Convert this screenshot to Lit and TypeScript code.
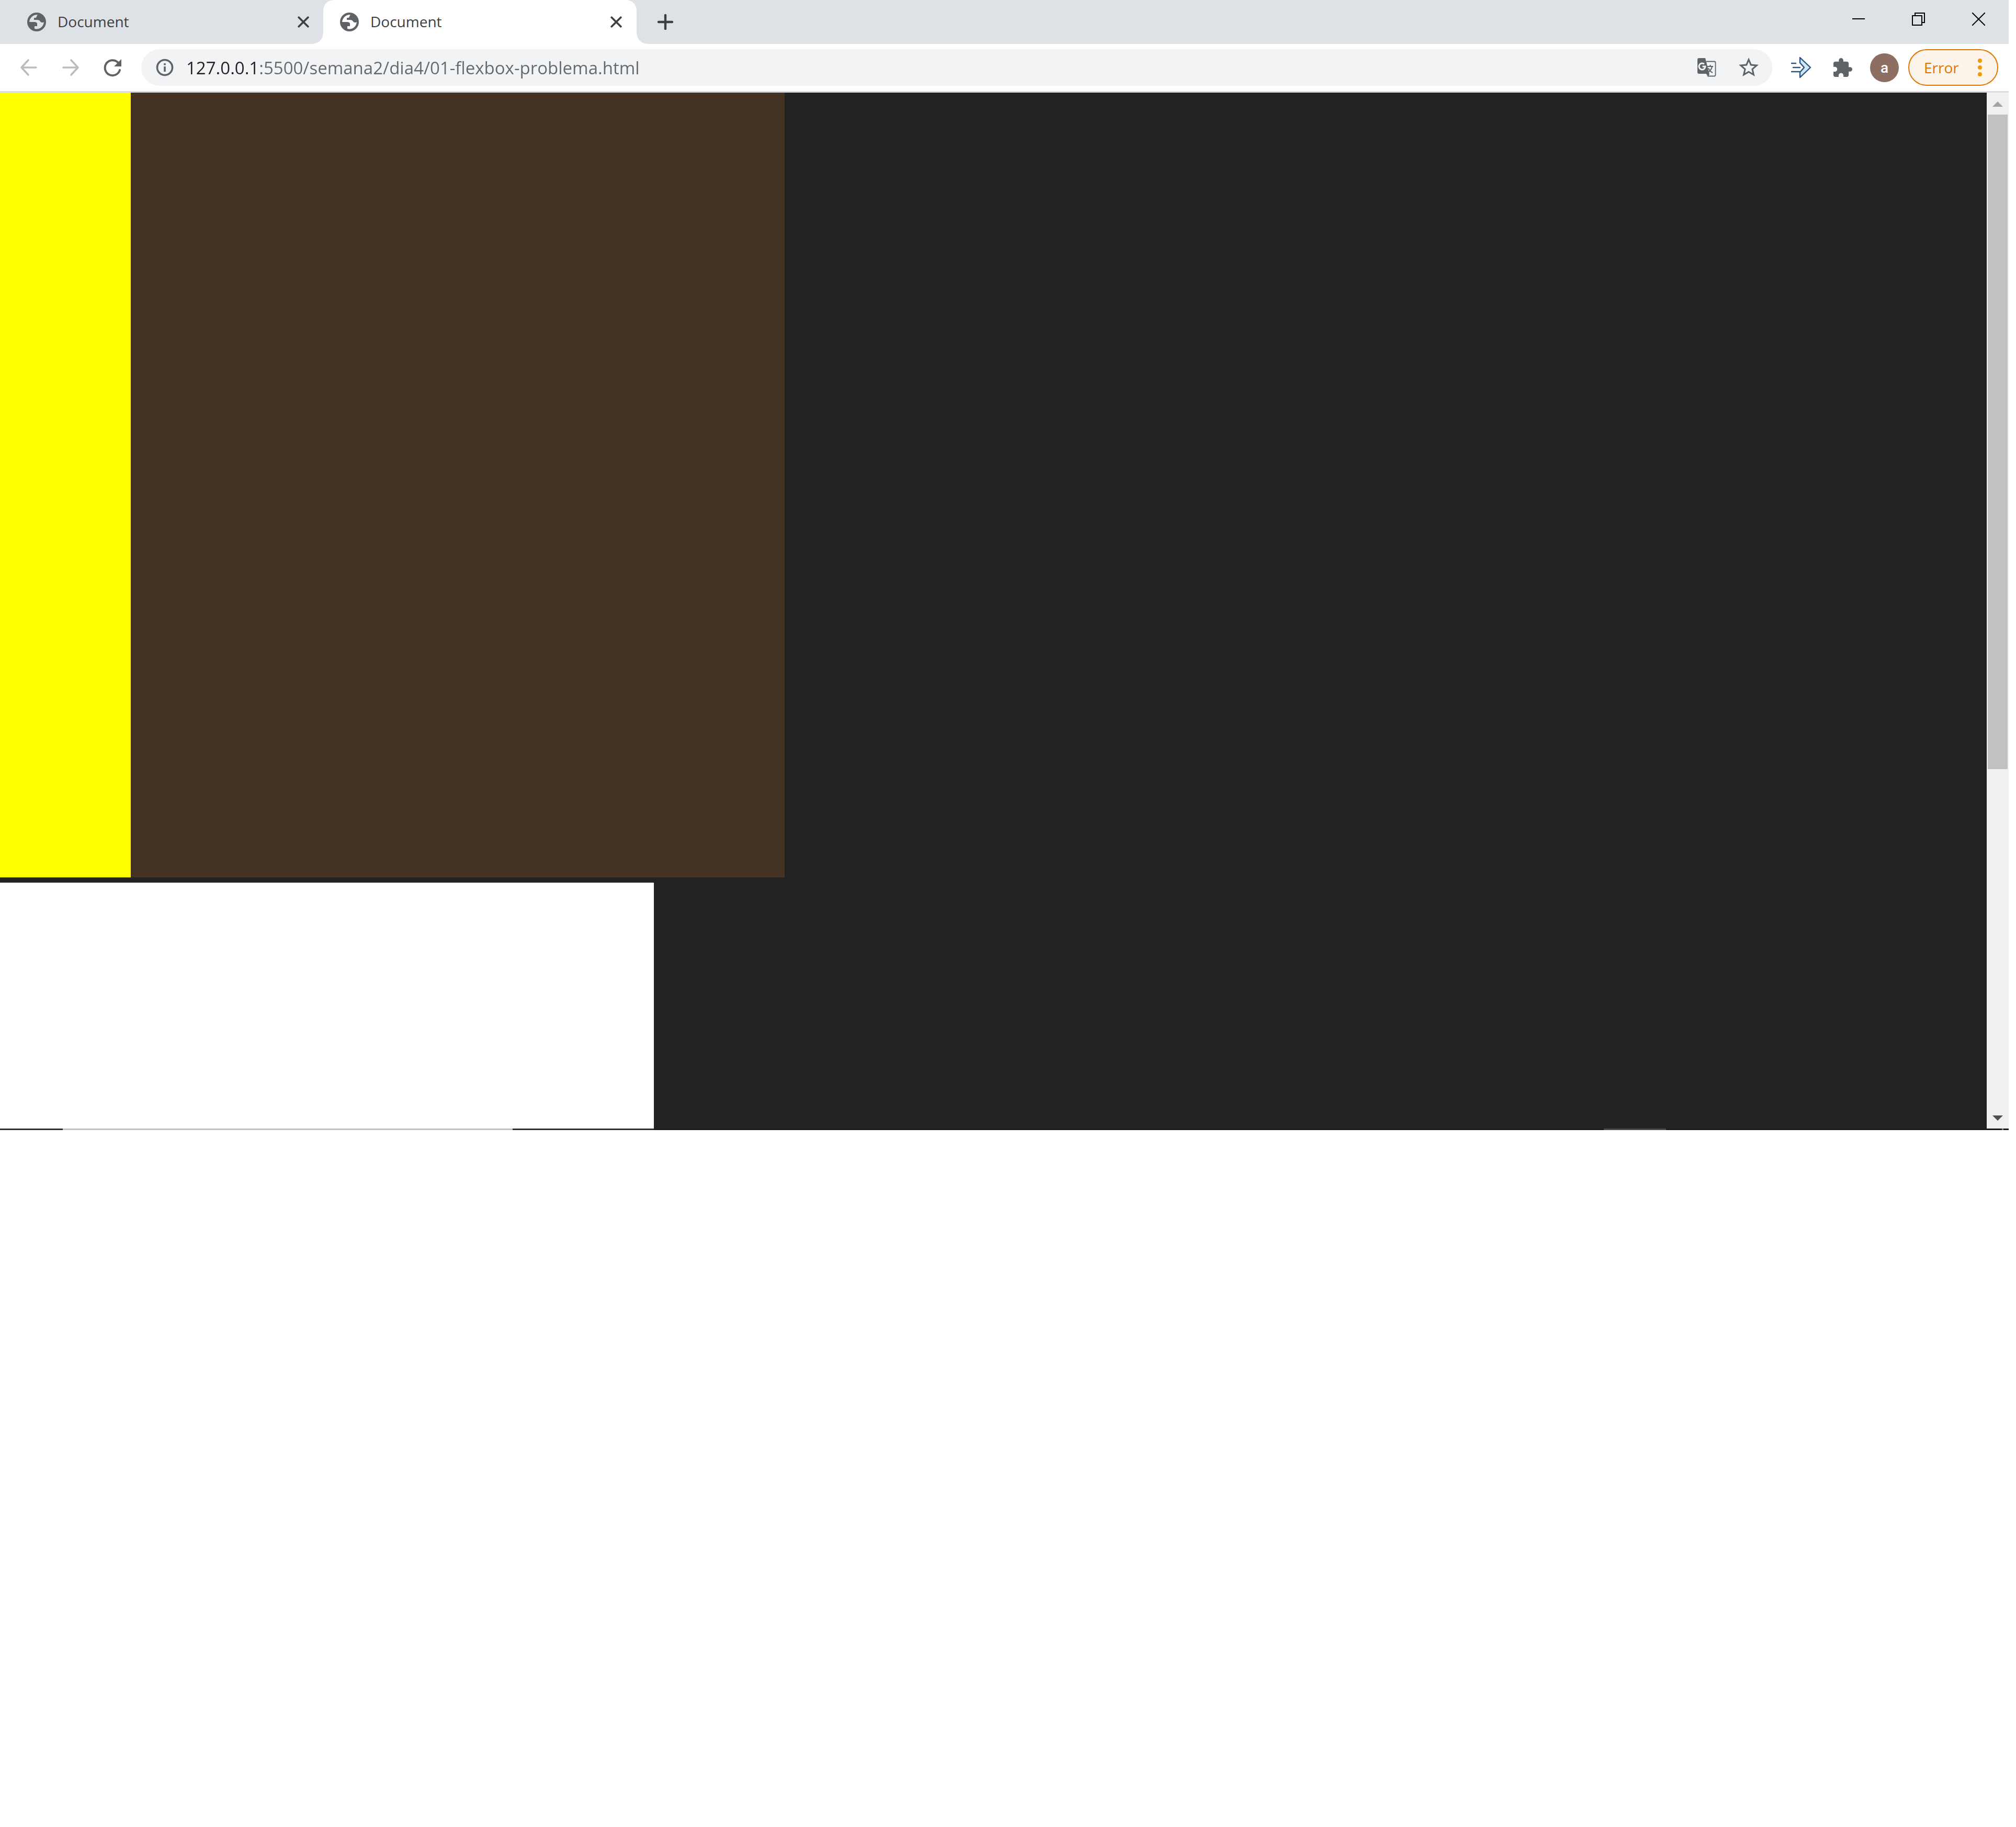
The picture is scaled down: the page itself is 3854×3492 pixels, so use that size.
import { LitElement, html, css } from "lit";
import { customElement } from "lit/decorators.js";

const globe = html`<svg class="globe" viewBox="0 0 36 36" aria-hidden="true">
  <circle cx="18" cy="18" r="18" fill="#5f6368" />
  <path fill="var(--tab-fill)" d="M20 4C11 4 5 10 4 18H13C17 18 19 19 19 22V26H14V31C24 33 31 27 32 18C30 20 26 19 25 17C24 15 22 14 19 14H13V11C13 10 14 10 16 10C18 10 18 6 20 4Z" />
</svg>`;
const cross = html`<svg class="cross" viewBox="0 0 20 20" aria-hidden="true">
  <path d="M2 2L18 18M18 2L2 18" stroke="#3c4043" stroke-width="3.4" stroke-linecap="round" />
</svg>`;
const arrow = (d: string) => html`<svg viewBox="0 0 34 34" width="34" height="34" aria-hidden="true">
  <path d=${d} fill="none" stroke="#babcbe" stroke-width="3.6" stroke-linecap="round" stroke-linejoin="round" />
</svg>`;

@customElement("app-root")
export class AppRoot extends LitElement {
  static styles = css`
    :host {
      display: block;
      min-height: 100vh;
      background: #fff;
      font-family: "Open Sans", "Noto Sans", sans-serif;
    }
    * { box-sizing: border-box; }
    svg { display: block; flex: none; }
    button {
      display: flex;
      align-items: center;
      justify-content: center;
      flex: none;
      margin: 0;
      padding: 0;
      border: 0;
      background: none;
      font: inherit;
    }
    .window { margin-right: 14px; }
    .strip {
      display: flex;
      height: 84px;
      background: #dee1e6;
      --tab-fill: #dee1e6;
    }
    .tab {
      display: flex;
      align-items: center;
      width: 599px;
      padding: 0 28px 0 32px;
      font-size: 28px;
      line-height: 40px;
      color: #3c4043;
    }
    .tab.idle { width: 618px; padding: 0 27px 0 52px; }
    .tab.active {
      position: relative;
      background: #fff;
      border-radius: 20px 20px 0 0;
      --tab-fill: #fff;
    }
    .tab.active::before,
    .tab.active::after {
      content: "";
      position: absolute;
      bottom: 0;
      width: 20px;
      height: 20px;
    }
    .tab.active::before { right: 100%; background: radial-gradient(circle at 0 0, transparent 19px, #fff 20px); }
    .tab.active::after { left: 100%; background: radial-gradient(circle at 100% 0, transparent 19px, #fff 20px); }
    .title { flex: 1; margin-left: 22px; padding-bottom: 2px; }
    .globe { width: 36px; height: 36px; }
    .cross { width: 22px; height: 22px; }
    .add { width: 110px; }
    .controls { display: flex; margin-left: auto; }
    .controls button { width: 115px; height: 72px; }
    .toolbar {
      display: flex;
      align-items: center;
      height: 93px;
      padding: 0 20px 0 15px;
      border-bottom: 3px solid #dadce0;
      background: #fff;
    }
    .nav { width: 80px; height: 70px; }
    .omnibox {
      display: flex;
      flex: 1;
      align-items: center;
      height: 70px;
      margin-left: 15px;
      padding: 0 25px 0 28px;
      border-radius: 35px;
      background: #f1f3f4;
    }
    .url {
      flex: 1;
      min-width: 0;
      height: 60px;
      margin: 0 0 0 24px;
      padding: 0;
      border: 0;
      outline: 0;
      font: 33px "Open Sans", "Noto Sans", sans-serif;
      color: #66696c;
      background: linear-gradient(90deg, #202124 140px, #66696c 140px);
      -webkit-background-clip: text;
      background-clip: text;
      -webkit-text-fill-color: transparent;
    }
    .action { width: 40px; height: 60px; }
    .action + .action { margin-left: 40px; }
    .ext { width: 80px; height: 70px; }
    .extensions { display: flex; margin-left: 15px; }
    .avatar {
      width: 55px;
      height: 55px;
      margin-left: 12px;
      border-radius: 50%;
      background: #8d6e63;
      color: #fff;
      font: 500 28px Roboto, sans-serif;
    }
    .error {
      justify-content: space-between;
      width: 172px;
      height: 70px;
      margin-left: 18px;
      padding: 0 28px;
      border: 2px solid #e37400;
      border-radius: 35px;
      background: #fcf3ea;
      color: #e37400;
      font-size: 28px;
    }
    .view { display: flex; background: #222; }
    .page { flex: 1; }
    .row { display: flex; height: 1500px; margin-bottom: 10px; }
    .yellow { width: 250px; background: #ff0; }
    .brown { width: 1250px; background: #432; }
    .white { width: 1250px; height: 470px; background: #fff; }
    .scroll {
      display: flex;
      flex-direction: column;
      align-items: center;
      width: 42px;
      background: #f0f0f0;
    }
    .step { width: 42px; height: 42px; padding-top: 2px; }
    .track { flex: 1; width: 38px; }
    .thumb { height: 1251px; background: #c1c1c1; }
    .taskbar {
      display: flex;
      height: 3px;
      background: linear-gradient(90deg, #303030 1250px, #1f1b1d 1250px);
    }
    .search { width: 860px; margin-left: 120px; background: #c1c1c1; }
    .running { width: 119px; margin-left: auto; background: #4a4a4a; }
    .peek { width: 3px; margin: 0 10px 0 642px; background: #777; }
  `;

  render() {
    return html`
      <div class="window">
        <header class="strip">
          <div class="tab idle">
            ${globe}<span class="title">Document</span>
            <button aria-label="Close tab">${cross}</button>
          </div>
          <div class="tab active">
            ${globe}<span class="title">Document</span>
            <button aria-label="Close tab">${cross}</button>
          </div>
          <button class="add" aria-label="New tab">
            <svg width="32" height="32" viewBox="0 0 32 32"><path d="M16 3V29M3 16H29" stroke="#3c4043" stroke-width="4.4" stroke-linecap="round" /></svg>
          </button>
          <div class="controls">
            <button aria-label="Minimize"><svg width="25" height="25"><path d="M1 12H25" stroke="#000" stroke-width="2" /></svg></button>
            <button aria-label="Restore"><svg width="25" height="25" fill="none" stroke="#000" stroke-width="2"><path d="M1 6H19V24H1ZM6 6V1H24V19H19" /></svg></button>
            <button aria-label="Close"><svg width="25" height="25"><path d="M0 0L25 25M25 0L0 25" stroke="#000" stroke-width="2" /></svg></button>
          </div>
        </header>
        <nav class="toolbar">
          <button class="nav" aria-label="Back">${arrow("M31 17H3M16 3L3 17L16 31")}</button>
          <button class="nav" aria-label="Forward">${arrow("M3 17H31M18 3L31 17L18 31")}</button>
          <button class="nav" aria-label="Reload">
            <svg width="36" height="36" viewBox="0 0 36 36">
              <path d="M32 23A14.5 14.5 0 1 1 28 8" fill="none" stroke="#5f6368" stroke-width="4" stroke-linecap="round" />
              <path d="M35 2V16H21Z" fill="#5f6368" />
            </svg>
          </button>
          <div class="omnibox">
            <button aria-label="Site information">
              <svg width="34" height="34" viewBox="0 0 34 34">
                <circle cx="17" cy="17" r="14.5" fill="none" stroke="#5f6368" stroke-width="3.6" />
                <path d="M15.2 9H18.8V12.6H15.2ZM15.2 15H18.8V25H15.2Z" fill="#5f6368" />
              </svg>
            </button>
            <input class="url" type="text" aria-label="Address" .value=${"127.0.0.1:5500/semana2/dia4/01-flexbox-problema.html"} />
            <button class="action" aria-label="Translate">
              <svg width="36" height="36" viewBox="0 0 36 36">
                <path d="M17 6.5H32A2.5 2.5 0 0 1 34.5 9V32A2.5 2.5 0 0 1 32 34.500H20" fill="none" stroke="#5f6368" stroke-width="1.8" />
                <path d="M3 0H15L23 31L20 36L17 30H3A3 3 0 0 1 0 27V3A3 3 0 0 1 3 0Z" fill="#5f6368" />
                <path d="M13 11.500A6 6 0 1 0 15 16H9.500" fill="none" stroke="#f1f3f4" stroke-width="3" />
                <path d="M19 16H30M24.500 13V16M28 16C27 21 24 25 20 28M21 19C22 22 25 26 29 28" fill="none" stroke="#5f6368" stroke-width="2" />
              </svg>
            </button>
            <button class="action" aria-label="Bookmark this tab">
              <svg width="38" height="38" viewBox="2 2 20 20">
                <path fill="#5f6368" d="M22 9.24l-7.19-.62L12 2 9.19 8.63 2 9.24l5.46 4.73L5.82 21 12 17.27 18.18 21l-1.63-7.03L22 9.24zM12 15.4l-3.76 2.27 1-4.28-3.32-2.88 4.38-.38L12 6.1l1.71 4.04 4.38.38-3.32 2.88 1 4.28L12 15.4z" />
              </svg>
            </button>
          </div>
          <div class="extensions">
            <button class="ext" aria-label="Extension">
              <svg width="40" height="42" viewBox="0 0 40 42" fill="none" stroke="#2b5480" stroke-width="2.4" stroke-linecap="round" stroke-linejoin="round">
                <path d="M18 2L38 21L18 40V30L26 21L18 12Z" fill="#cfe6f8" />
                <path d="M2 13H10M5 21H18M2 29H17" />
              </svg>
            </button>
            <button class="ext" aria-label="Extensions">
              <svg width="36" height="36" viewBox="2 1 21 21">
                <path fill="#5f6368" d="M20.5 11H19V7c0-1.1-.9-2-2-2h-4V3.5C13 2.12 11.88 1 10.5 1S8 2.12 8 3.5V5H4c-1.1 0-1.990.9-1.990 2v3.800H3.500c1.490 0 2.700 1.210 2.700 2.700s-1.210 2.700-2.700 2.700H2V20c0 1.100.9 2 2 2h3.800v-1.500c0-1.490 1.210-2.700 2.700-2.700 1.490 0 2.700 1.210 2.700 2.700V22H17c1.100 0 2-.9 2-2v-4h1.500c1.380 0 2.500-1.120 2.500-2.500S21.880 11 20.500 11z" />
              </svg>
            </button>
          </div>
          <button class="avatar" aria-label="Profile">a</button>
          <button class="error">
            <span>Error</span>
            <svg width="10" height="36" fill="#f29900"><circle cx="5" cy="5" r="4" /><circle cx="5" cy="18" r="4" /><circle cx="5" cy="31" r="4" /></svg>
          </button>
        </nav>
        <main class="view">
          <div class="page">
            <div class="row"><div class="yellow"></div><div class="brown"></div></div>
            <div class="white"></div>
          </div>
          <div class="scroll">
            <button class="step" aria-label="Scroll up"><svg width="20" height="10"><path d="M10 0L20 10H0Z" fill="#a3a3a3" /></svg></button>
            <div class="track"><div class="thumb"></div></div>
            <button class="step" aria-label="Scroll down"><svg width="20" height="10"><path d="M0 0H20L10 10Z" fill="#505050" /></svg></button>
          </div>
        </main>
        <footer class="taskbar">
          <div class="search"></div>
          <div class="running"></div>
          <div class="peek"></div>
        </footer>
      </div>
    `;
  }
}
